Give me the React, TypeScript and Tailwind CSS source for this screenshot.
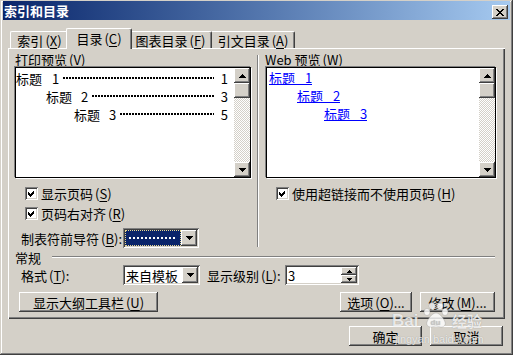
import React from "react";

const RAISED =
  "shadow-[inset_-1px_-1px_#404040,inset_1px_1px_#ffffff,inset_-2px_-2px_#808080,inset_2px_2px_#d4d0c8]";
const SUNKEN =
  "shadow-[inset_1px_1px_#808080,inset_-1px_-1px_#ffffff,inset_2px_2px_#404040,inset_-2px_-2px_#d4d0c8]";

function DownTri() {
  return (
    <svg width="7" height="4" viewBox="0 0 7 4" shapeRendering="crispEdges">
      <rect x="0" y="0" width="7" height="1" fill="#000" />
      <rect x="1" y="1" width="5" height="1" fill="#000" />
      <rect x="2" y="2" width="3" height="1" fill="#000" />
      <rect x="3" y="3" width="1" height="1" fill="#000" />
    </svg>
  );
}

function UpTri() {
  return (
    <svg width="7" height="4" viewBox="0 0 7 4" shapeRendering="crispEdges">
      <rect x="3" y="0" width="1" height="1" fill="#000" />
      <rect x="2" y="1" width="3" height="1" fill="#000" />
      <rect x="1" y="2" width="5" height="1" fill="#000" />
      <rect x="0" y="3" width="7" height="1" fill="#000" />
    </svg>
  );
}

function SmallTri({ up }: { up?: boolean }) {
  return (
    <svg width="5" height="3" viewBox="0 0 5 3" shapeRendering="crispEdges">
      {up ? (
        <>
          <rect x="2" y="0" width="1" height="1" fill="#000" />
          <rect x="1" y="1" width="3" height="1" fill="#000" />
          <rect x="0" y="2" width="5" height="1" fill="#000" />
        </>
      ) : (
        <>
          <rect x="0" y="0" width="5" height="1" fill="#000" />
          <rect x="1" y="1" width="3" height="1" fill="#000" />
          <rect x="2" y="2" width="1" height="1" fill="#000" />
        </>
      )}
    </svg>
  );
}

function Checkbox() {
  return (
    <div className={`w-[13px] h-[13px] bg-white flex items-center justify-center shrink-0 ${SUNKEN}`}>
      <svg width="7" height="7" viewBox="0 0 7 7" shapeRendering="crispEdges">
        <polygon points="0,2 2,4 6,0 6,3 2,7 0,5" fill="#000" />
      </svg>
    </div>
  );
}

function Scrollbar() {
  return (
    <div className="w-[16px] h-full flex flex-col shrink-0">
      <div className={`h-[15px] bg-[#d4d0c8] flex items-center justify-center ${RAISED}`}>
        <UpTri />
      </div>
      <div className={`h-[15px] bg-[#d4d0c8] ${RAISED}`} />
      <div className="flex-1 bg-[repeating-conic-gradient(#ffffff_0_25%,#d4d0c8_0_50%)] bg-[length:2px_2px]" />
      <div className={`h-[15px] bg-[#d4d0c8] flex items-center justify-center ${RAISED}`}>
        <DownTri />
      </div>
    </div>
  );
}

function ComboButton() {
  return (
    <div className={`w-[16px] h-[16px] bg-[#d4d0c8] flex items-center justify-center shrink-0 ${RAISED}`}>
      <DownTri />
    </div>
  );
}

function Btn({ children, className }: { children: React.ReactNode; className: string }) {
  return (
    <div className={`h-[20px] bg-[#d4d0c8] flex items-center justify-center ${RAISED} ${className}`}>
      <span>{children}</span>
    </div>
  );
}

function Mn({ c }: { c: string }) {
  return (
    <span className="ml-[2px]">
      (<span className="underline underline-offset-2">{c}</span>)
    </span>
  );
}

function PreviewRow({ pl, n, p, gap }: { pl: string; n: string; p: string; gap: string }) {
  return (
    <div className={`h-[18px] flex items-center ${pl}`}>
      <span>标题</span>
      <span className={gap}>{n}</span>
      <div className="flex-1 ml-[4px] h-[2px] bg-[repeating-linear-gradient(to_right,#000_0_2px,transparent_2px_3px)]" />
      <span className="ml-[7px] mr-[6px]">{p}</span>
    </div>
  );
}

function LinkRow({ pl, n }: { pl: string; n: string }) {
  return (
    <div className={`h-[18px] flex items-center ${pl}`}>
      <span className="inline-flex h-[14px] items-center border-b border-[#0000ff] text-[#0000ff]">
        <span>标题</span>
        <span className="ml-[10px]">{n}</span>
      </span>
    </div>
  );
}

export default function App() {
  return (
    <div className="relative w-[513px] h-[355px] overflow-hidden bg-[#d4d0c8] font-['Noto_Sans_CJK_SC',sans-serif] text-[13px] leading-[15px] text-black shadow-[inset_-1px_-1px_#404040,inset_1px_1px_#d4d0c8,inset_-2px_-2px_#808080,inset_2px_2px_#ffffff]">
      {/* title bar */}
      <div className="mx-[3px] mt-[1px] h-[19px] bg-linear-to-r from-[#0a246a] to-[#a6caf0] flex items-start justify-between">
        <span className="ml-[1px] mt-[2px] text-white font-bold text-[13px] leading-[15px]">索引和目录</span>
        <div className={`mt-[4px] mr-[2px] w-[16px] h-[14px] bg-[#d4d0c8] flex items-center justify-center ${RAISED}`}>
          <svg width="8" height="7" viewBox="0 0 8 7" shapeRendering="crispEdges">
            <path d="M0 0h2l2 2.5L6 0h2L5 3.5 8 7H6L4 4.5 2 7H0l3-3.5z" fill="#000" />
          </svg>
        </div>
      </div>

      {/* tabs */}
      <div className="relative z-20 ml-[10px] mt-[8px] h-[20px] flex items-end">
        <div className="w-[58px] h-[17px] border-t border-l border-white rounded-tl-[2px] flex items-center justify-center">
          <span>索引<Mn c="X" /></span>
        </div>
        <div className="relative z-20 -ml-[2px] -mr-[2px] -mb-[1px] w-[66px] h-[21px] bg-[#d4d0c8] border-t border-l border-white border-r border-r-[#404040] rounded-t-[2px] shadow-[inset_-1px_0_#808080] flex items-center justify-center">
          <span className="-mt-[2px]">目录<Mn c="C" /></span>
        </div>
        <div className="w-[82px] h-[17px] border-t border-white border-r border-r-[#404040] rounded-tr-[2px] shadow-[inset_-1px_0_#808080] flex items-center justify-center">
          <span>图表目录<Mn c="F" /></span>
        </div>
        <div className="w-[83px] h-[17px] border-t border-white border-r border-r-[#404040] rounded-tr-[2px] shadow-[inset_-1px_0_#808080] flex items-center justify-center">
          <span>引文目录<Mn c="A" /></span>
        </div>
      </div>

      {/* panel */}
      <div className="ml-[8px] w-[497px] h-[271px] bg-[#d4d0c8] shadow-[inset_1px_1px_#ffffff,inset_-1px_-1px_#404040,inset_-2px_-2px_#808080] flex flex-col pl-[7px]">
        <div className="flex items-start h-[200px]">
          {/* left column */}
          <div className="w-[236px] flex flex-col">
            <div className="mt-[4px] h-[15px]">
              打印预览<Mn c="V" />
            </div>
            <div className="h-[111px] bg-white border border-black flex shadow-[-1px_-1px_0_#808080,1px_1px_0_#ffffff]">
              <div className="flex-1 pt-[1px] flex flex-col">
                <PreviewRow pl="pl-0" n="1" p="1" gap="ml-[10px]" />
                <PreviewRow pl="pl-[30px]" n="2" p="3" gap="ml-[9px]" />
                <PreviewRow pl="pl-[58px]" n="3" p="5" gap="ml-[9px]" />
              </div>
              <Scrollbar />
            </div>
            <div className="mt-[8px] h-[14px] pl-[10px] flex items-center">
              <Checkbox />
              <span className="ml-[3px]">显示页码<Mn c="S" /></span>
            </div>
            <div className="mt-[6px] h-[14px] pl-[10px] flex items-center">
              <Checkbox />
              <span className="ml-[3px]">页码右对齐<Mn c="R" /></span>
            </div>
            <div className="mt-[8px] h-[20px] pl-[6px] flex items-center">
              <span className="w-[102px]">制表符前导符<Mn c="B" />:</span>
              <div className={`w-[76px] h-[20px] bg-white flex items-center p-[2px] ${SUNKEN}`}>
                <div className="flex-1 h-[16px] bg-[#0a246a] outline outline-dotted outline-[#e8d890] -outline-offset-1 flex items-center px-[4px]">
                  <div className="flex-1 h-[2px] bg-[repeating-linear-gradient(to_right,#ffffff_0_2px,transparent_2px_4px)]" />
                </div>
                <ComboButton />
              </div>
            </div>
          </div>

          {/* separator */}
          <div className="ml-[6px] mt-[7px] w-[2px] h-[192px] border-l border-[#808080] border-r border-r-white" />

          {/* right column */}
          <div className="ml-[7px] w-[230px] flex flex-col">
            <div className="-ml-[1px] mt-[4px] h-[15px]">
              Web 预览<Mn c="W" />
            </div>
            <div className="h-[111px] bg-white border border-black flex shadow-[-1px_-1px_0_#808080,1px_1px_0_#ffffff]">
              <div className="flex-1 pt-[1px] flex flex-col">
                <LinkRow pl="pl-[2px]" n="1" />
                <LinkRow pl="pl-[30px]" n="2" />
                <LinkRow pl="pl-[57px]" n="3" />
              </div>
              <Scrollbar />
            </div>
            <div className="mt-[8px] h-[14px] pl-[10px] flex items-center">
              <Checkbox />
              <span className="ml-[3px]">使用超链接而不使用页码<Mn c="H" /></span>
            </div>
          </div>
        </div>

        {/* 常规 */}
        <div className="mt-[2px] h-[14px] flex items-center">
          <span className="w-[37px]">常规</span>
          <div className="w-[443px] h-[2px] border-t border-[#808080] border-b border-b-white" />
        </div>

        <div className="mt-[1px] h-[20px] pl-[6px] flex items-center">
          <span className="w-[102px]">格式<Mn c="T" />:</span>
          <div className={`w-[77px] h-[20px] bg-white flex items-center p-[2px] ${SUNKEN}`}>
            <span className="flex-1 pl-[1px]">来自模板</span>
            <ComboButton />
          </div>
          <span className="ml-[7px] w-[78px]">显示级别<Mn c="L" />:</span>
          <div className={`w-[74px] h-[20px] bg-white flex items-center p-[2px] ${SUNKEN}`}>
            <span className="flex-1 pl-[1px]">3</span>
            <div className="w-[16px] h-[16px] flex flex-col">
              <div className={`h-[8px] bg-[#d4d0c8] flex items-center justify-center ${RAISED}`}>
                <SmallTri up />
              </div>
              <div className={`h-[8px] bg-[#d4d0c8] flex items-center justify-center ${RAISED}`}>
                <SmallTri />
              </div>
            </div>
          </div>
        </div>

        <div className="mt-[7px] h-[20px] flex items-center">
          <Btn className="ml-[4px] w-[139px]">
            显示大纲工具栏<Mn c="U" />
          </Btn>
          <Btn className="ml-[182px] w-[72px] h-[19px]">
            选项<Mn c="O" />...
          </Btn>
          <Btn className="ml-[8px] w-[75px] h-[19px]">
            修改<Mn c="M" />...
          </Btn>
        </div>
      </div>

      {/* bottom buttons */}
      <div className="mt-[7px] pr-[10px] flex justify-end gap-[8px]">
        <Btn className="w-[73px] h-[19px]">确定</Btn>
        <Btn className="w-[73px] h-[19px]">取消</Btn>
      </div>

      {/* watermark */}
      <div className="absolute left-[390px] top-[300px] w-[100px] h-[46px] pointer-events-none text-white/80 [text-shadow:0_0_1px_rgba(0,0,0,0.35)]">
        <span className="absolute left-[2px] top-[12px] font-['Liberation_Sans',sans-serif] font-bold text-[17px] leading-[17px]">Bai</span>
        <svg className="absolute left-[31px] top-[2px]" width="30" height="26" viewBox="0 0 30 26">
          <g fill="rgba(255,255,255,0.8)" stroke="rgba(120,120,120,0.35)" strokeWidth="0.8">
            <ellipse cx="6" cy="10" rx="3" ry="3.5" />
            <ellipse cx="11" cy="4" rx="3" ry="3.5" />
            <ellipse cx="19" cy="4" rx="3" ry="3.5" />
            <ellipse cx="24" cy="10" rx="3" ry="3.5" />
            <path d="M15 11c-4 0-8 6-9 9-1 3 1 5 4 5 2 0 3-1 5-1s3 1 5 1c3 0 5-2 4-5-1-3-5-9-9-9z" />
          </g>
          <text x="9.5" y="23" fontSize="8" fontWeight="bold" fill="rgba(200,200,200,0.9)" fontFamily="Liberation Sans, sans-serif">du</text>
        </svg>
        <span className="absolute left-[62px] top-[12px] font-bold text-[15px] leading-[17px]">经验</span>
        <span className="absolute left-[5px] top-[33px] font-['Liberation_Sans',sans-serif] text-[11px] leading-[12px]">jingyan.baidu.com</span>
      </div>
    </div>
  );
}
